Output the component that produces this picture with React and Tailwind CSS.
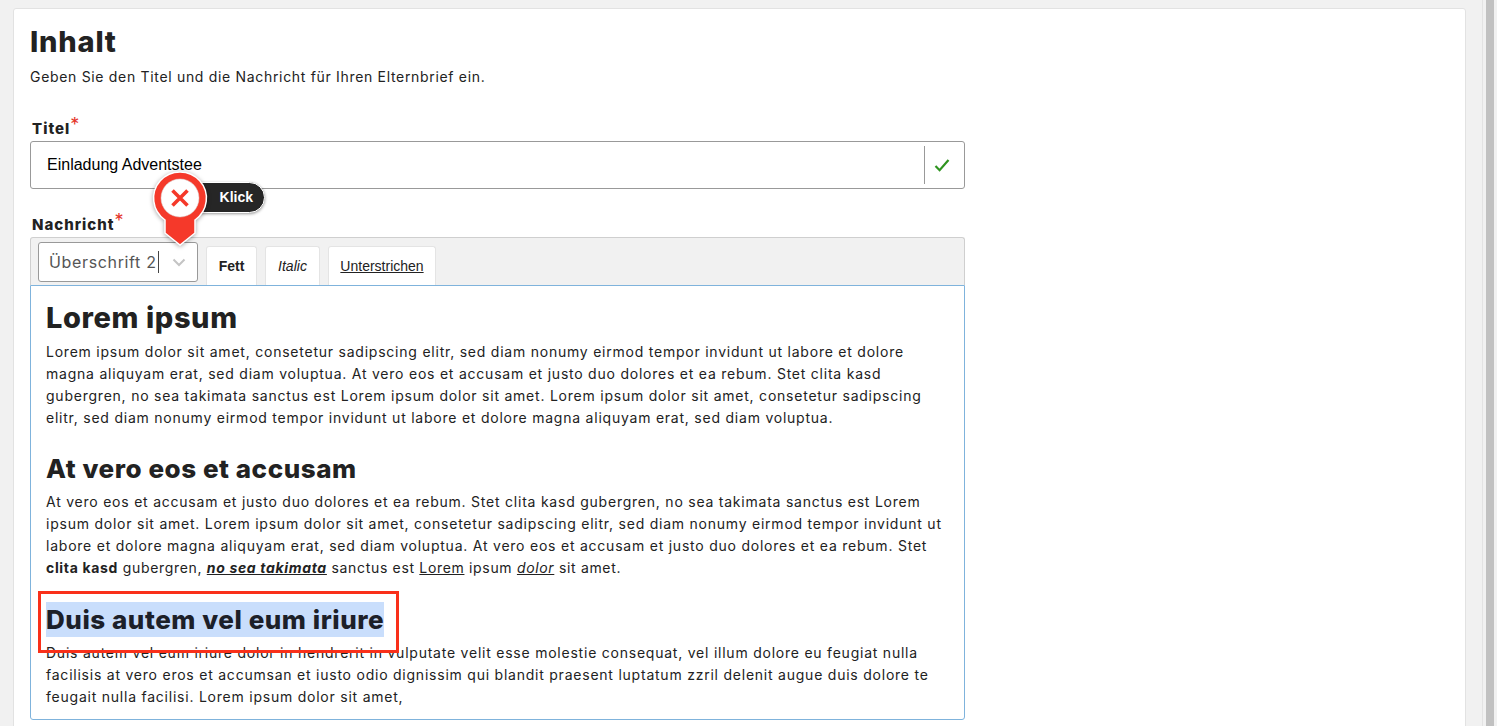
export default function App() {
  const base = "font-['Inter',sans-serif] text-[14px] leading-[22px] text-[#222] whitespace-nowrap";
  const body = `${base} tracking-[0.77px]`;
  const h = "font-['Inter',sans-serif] font-extrabold text-[#222] whitespace-nowrap";
  const star = "text-[#e5352a] font-normal text-[18px] top-[-3px] tracking-normal";
  const tab = "h-[39px] bg-white border border-b-0 border-[#e4e4e4] rounded-t-[3px] flex items-center justify-center font-['Liberation_Sans',sans-serif] text-[14px] text-[#222]";
  return (
    <div className="flex h-[726px] w-full overflow-hidden bg-[#f1f1f1]">
      <main className="flex-1 min-w-0 pt-[8px] pl-[13px]">
        <div className="w-[1453px] h-[760px] bg-white border border-[#e2e2e2] rounded-[3px] pl-[16px] pt-[16px]">
          <h1 className={`${h} text-[29px] leading-[34px] tracking-[0.8px]`}>Inhalt</h1>
          <p className={`${base} mt-[7px] tracking-[0.68px]`}>Geben Sie den Titel und die Nachricht für Ihren Elternbrief ein.</p>

          <div className="mt-[30px] w-[935px]">
            <label className={`${h} block pl-[2px] text-[15px] leading-[22px] tracking-[1px]`}>Titel<sup className={star}>*</sup></label>
            <div className="mt-[1px] h-[48px] flex items-center border border-[#999] rounded-[3px] pl-[16px]">
              <span className="flex-1 font-['Liberation_Sans',sans-serif] text-[16px] text-black">Einladung Adventstee</span>
              <span className="w-px h-[38px] bg-[#999]"></span>
              <span className="w-[34px] mr-[5px] flex justify-center">
                <svg width="16" height="15" viewBox="0 0 16 15" fill="none"><path d="M1.5 8 L5.6 12.2 L14.5 2" stroke="#2f9420" strokeWidth="2.2"/></svg>
              </span>
            </div>
          </div>

          <div className="relative mt-[25px] w-[935px]">
            <label className={`${h} block pl-[2px] text-[15px] leading-[22px] tracking-[1px]`}>Nachricht<sup className={star}>*</sup></label>
            <div className="mt-[1px] h-[48px] bg-[#f1f1f1] border border-b-0 border-[#cfcfcf] rounded-t-[3px] flex items-start pl-[7px] pt-[4px]">
              <div className="w-[160px] h-[40px] bg-white border border-[#999] rounded-[3px] flex items-center pl-[10px]">
                <span className="font-['Inter',sans-serif] text-[16px] text-[#555] tracking-[0.65px] whitespace-nowrap">Überschrift 2</span>
                <span className="w-px h-[22px] bg-[#444] ml-[1px]"></span>
                <svg className="ml-[13px]" width="14" height="9" viewBox="0 0 14 9" fill="none"><path d="M1.5 1.5 L7 7 L12.5 1.5" stroke="#c4c4c4" strokeWidth="2"/></svg>
              </div>
              <div className="flex gap-[8px] ml-[8px] mt-[4px]">
                <button className={`${tab} w-[51px] font-bold`}>Fett</button>
                <button className={`${tab} w-[55px] italic`}>Italic</button>
                <button className={`${tab} w-[108px] underline`}>Unterstrichen</button>
              </div>
            </div>
            <div className="h-[435px] bg-white border border-[#7fb3dc] rounded-b-[3px] pl-[15px] pt-[13px]">
              <h2 className={`${h} text-[29px] leading-[38px] tracking-[0.6px]`}>Lorem ipsum</h2>
              <p className={`${body} mt-[4px]`}>
                Lorem ipsum dolor sit amet, consetetur sadipscing elitr, sed diam nonumy eirmod tempor invidunt ut labore et dolore<br/>
                magna aliquyam erat, sed diam voluptua. At vero eos et accusam et justo duo dolores et ea rebum. Stet clita kasd<br/>
                gubergren, no sea takimata sanctus est Lorem ipsum dolor sit amet. Lorem ipsum dolor sit amet, consetetur sadipscing<br/>
                elitr, sed diam nonumy eirmod tempor invidunt ut labore et dolore magna aliquyam erat, sed diam voluptua.
              </p>
              <h3 className={`${h} text-[26px] leading-[34px] mt-[23px] tracking-[0.55px]`}>At vero eos et accusam</h3>
              <p className={`${body} mt-[5px]`}>
                At vero eos et accusam et justo duo dolores et ea rebum. Stet clita kasd gubergren, no sea takimata sanctus est Lorem<br/>
                ipsum dolor sit amet. Lorem ipsum dolor sit amet, consetetur sadipscing elitr, sed diam nonumy eirmod tempor invidunt ut<br/>
                labore et dolore magna aliquyam erat, sed diam voluptua. At vero eos et accusam et justo duo dolores et ea rebum. Stet<br/>
                <span className="tracking-[0.67px]"><b>clita kasd</b> gubergren, <b className="italic underline">no sea takimata</b> sanctus est <u>Lorem</u> ipsum <i className="underline">dolor</i> sit amet.</span>
              </p>
              <h3 className={`${h} text-[26px] leading-[35px] mt-[23px] tracking-[0.55px]`}><span className="bg-[#c9defc] text-[#1c2029] inline-block">Duis autem vel eum iriure</span></h3>
              <p className={`${body} mt-[5px]`}>
                Duis autem vel eum iriure dolor in hendrerit in vulputate velit esse molestie consequat, vel illum dolore eu feugiat nulla<br/>
                facilisis at vero eros et accumsan et iusto odio dignissim qui blandit praesent luptatum zzril delenit augue duis dolore te<br/>
                feugait nulla facilisi. Lorem ipsum dolor sit amet,
              </p>
            </div>
            {/* red highlight over the selected heading */}
            <div className="absolute left-[8px] top-[377px] w-[361px] h-[62px] border-[3px] border-[#f9301a] pointer-events-none"></div>
            {/* click marker */}
            <div className="absolute left-[170px] top-[-32px] h-[31px] w-[65px] rounded-r-full bg-[#262626] border-[1.5px] border-white shadow-[0_1px_3px_rgba(0,0,0,0.4)] flex items-center justify-end pr-[11px] font-['Liberation_Sans',sans-serif] font-bold text-[14px] text-white">Klick</div>
            <svg className="absolute left-[120px] top-[-44px] overflow-visible" width="60" height="76" viewBox="0 0 60 76" fill="none">
              <path d="M15 50 A26.4 26.4 0 1 1 45 50 V63 L30 75 L15 63 Z" fill="#f5392a" stroke="#fff" strokeWidth="1.5" style={{filter:"drop-shadow(0 1px 2px rgba(0,0,0,0.35))"}}/>
              <circle cx="30" cy="28" r="19" fill="#fff" stroke="#d8d8d8" strokeWidth="0.5"/>
              <path d="M22.5 20.5 L37.5 35.5 M37.5 20.5 L22.5 35.5" stroke="#f5392a" strokeWidth="3.6"/>
            </svg>
          </div>
        </div>
      </main>
      <aside className="w-[15px] shrink-0 border-l border-[#e3e3e3] bg-[#f1f1f1] pl-[3px] pr-[3px]">
        <div className="h-full w-[8px] bg-[#c1c1c1]"></div>
      </aside>
    </div>
  );
}
